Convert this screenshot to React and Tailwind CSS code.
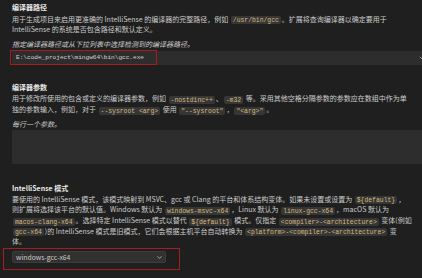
import { ChevronDown } from 'lucide-react';

const Code = ({ children }) => (
  <code className="mx-[1px] rounded-[2px] bg-[#363636] px-[2px] py-[0.5px] font-['Liberation_Mono','DejaVu_Sans_Mono',monospace] text-[6.4px] text-[#d7ba7d]">
    {children}
  </code>
);

const Line = ({ children, className = '' }) => (
  <div className={`h-[10.6px] whitespace-nowrap leading-[10.6px] ${className}`}>{children}</div>
);

export default function App() {
  return (
    <div className="h-[278px] w-[422px] overflow-hidden bg-[#1f1f1f] pl-[12px] font-['Noto_Sans_CJK_SC',sans-serif] text-[7px] text-[#cccccc]">
      {/* 编译器路径 */}
      <div className="pt-[2px]">
        <div className="h-[11px] leading-[11px] font-semibold text-[#e7e7e7]">编译器路径</div>
        <Line className="mt-[0.5px]">
          用于生成项目来启用更准确的 IntelliSense 的编译器的完整路径，例如 <Code>/usr/bin/gcc</Code>。扩展将查询编译器以确定要用于
        </Line>
        <Line>IntelliSense 的系统是否包含路径和默认定义。</Line>
        <Line className="mt-[4.5px] italic">指定编译器路径或从下拉列表中选择检测到的编译器路径。</Line>
        <div className="relative mt-[1px] flex h-[14px] items-center bg-[#2d2d2d] pl-[4px]">
          <span className="font-['Liberation_Mono','DejaVu_Sans_Mono',monospace] text-[6.1px] text-[#d4d4d4]">
            E:\code_project\mingw64\bin\gcc.exe
          </span>
          <ChevronDown className="absolute right-[-4px] top-[3px] h-[8px] w-[8px] text-[#cccccc]" strokeWidth={2} />
          <div className="absolute left-[-2px] top-[-1px] h-[15px] w-[147px] border border-[#a51d1d]" />
        </div>
      </div>

      {/* 编译器参数 */}
      <div className="mt-[17px]">
        <div className="h-[11px] leading-[11px] font-semibold text-[#e7e7e7]">编译器参数</div>
        <Line className="mt-[0.5px] h-[11px] leading-[11px]">
          用于修改所使用的包含或定义的编译器参数，例如 <Code>-nostdinc++</Code>、<Code>-m32</Code> 等。采用其他空格分隔参数的参数应在数组中作为单
        </Line>
        <Line className="h-[11px] leading-[11px]">
          独的参数输入，例如，对于 <Code>--sysroot &lt;arg&gt;</Code> 使用 <Code>"--sysroot"</Code>，<Code>"&lt;arg&gt;"</Code>。
        </Line>
        <Line className="mt-[3.5px] italic">每行一个参数。</Line>
        <div className="mt-[0.5px] h-[34px] bg-[#2d2d2d]" />
      </div>

      {/* IntelliSense 模式 */}
      <div className="mt-[19px]">
        <div className="h-[11px] leading-[11px] font-semibold text-[#e7e7e7]">IntelliSense 模式</div>
        <Line>
          要使用的 IntelliSense 模式，该模式映射到 MSVC、gcc 或 Clang 的平台和体系结构变体。如果未设置或设置为 <Code>{'${default}'}</Code>，
        </Line>
        <Line>
          则扩展将选择该平台的默认值。Windows 默认为 <Code>windows-msvc-x64</Code>，Linux 默认为 <Code>linux-gcc-x64</Code>，macOS 默认为
        </Line>
        <Line>
          <Code>macos-clang-x64</Code>。选择特定 IntelliSense 模式以替代 <Code>{'${default}'}</Code> 模式。仅指定 <Code>&lt;compiler&gt;-&lt;architecture&gt;</Code> 变体(例如
        </Line>
        <Line>
          <Code>gcc-x64</Code>)的 IntelliSense 模式是旧模式，它们会根据主机平台自动转换为 <Code>&lt;platform&gt;-&lt;compiler&gt;-&lt;architecture&gt;</Code> 变
        </Line>
        <Line>体。</Line>
        <div className="relative mt-[4.5px] flex h-[12px] w-[154px] items-center justify-between rounded-[2px] border border-[#3c3c3c] bg-[#313131] pl-[3px] pr-[2px]">
          <span className="text-[6.8px] text-[#cccccc]">windows-gcc-x64</span>
          <ChevronDown className="h-[7px] w-[7px] text-[#cccccc]" strokeWidth={2.5} />
          <div className="absolute left-[-10px] top-[-4px] h-[22px] w-[177px] border border-[#a51d1d]" />
        </div>
      </div>
    </div>
  );
}
